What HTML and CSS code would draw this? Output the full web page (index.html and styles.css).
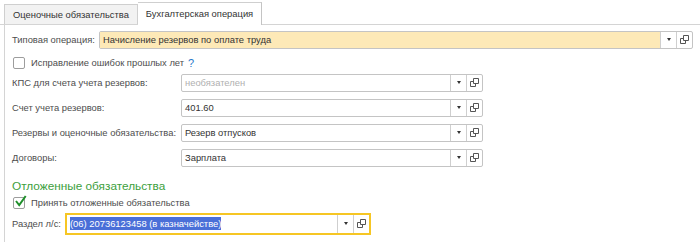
FILE: index.html
```html
<!DOCTYPE html>
<html>
	<head>
		<title>Бухгалтерская операция</title>
		<link rel="stylesheet" href="styles.css">
	</head>
	<body>
		<div class="tabs">
			<div class="tab">Оценочные обязательства</div>
			<div class="tab active">Бухгалтерская операция</div>
		</div>
		<div class="panel">
			<div class="row row-first">
				<span class="label label-short">Типовая операция:</span>
				<div class="field field-wide field-yellow">
					<span class="value">Начисление резервов по оплате труда</span>
					<span class="btn"><span class="arrow"></span></span>
					<span class="btn"><svg width="9" height="9" viewBox="0 0 9 9"><path d="M3.5 0.5h5v5h-5z" fill="none" stroke="#555"/><path d="M3.5 3.5h-3v5h5v-3" fill="none" stroke="#555"/></svg></span>
				</div>
			</div>
			<div class="check-row check-row-low">
				<span class="checkbox"></span>
				<span>Исправление ошибок прошлых лет</span>
				<span class="help">?</span>
			</div>
			<div class="row">
				<span class="label">КПС для счета учета резервов:</span>
				<div class="field">
					<span class="value placeholder">необязателен</span>
					<span class="btn"><span class="arrow"></span></span>
					<span class="btn"><svg width="9" height="9" viewBox="0 0 9 9"><path d="M3.5 0.5h5v5h-5z" fill="none" stroke="#555"/><path d="M3.5 3.5h-3v5h5v-3" fill="none" stroke="#555"/></svg></span>
				</div>
			</div>
			<div class="row">
				<span class="label">Счет учета резервов:</span>
				<div class="field">
					<span class="value">401.60</span>
					<span class="btn"><span class="arrow"></span></span>
					<span class="btn"><svg width="9" height="9" viewBox="0 0 9 9"><path d="M3.5 0.5h5v5h-5z" fill="none" stroke="#555"/><path d="M3.5 3.5h-3v5h5v-3" fill="none" stroke="#555"/></svg></span>
				</div>
			</div>
			<div class="row">
				<span class="label">Резервы и оценочные обязательства:</span>
				<div class="field">
					<span class="value">Резерв отпусков</span>
					<span class="btn"><span class="arrow"></span></span>
					<span class="btn"><svg width="9" height="9" viewBox="0 0 9 9"><path d="M3.5 0.5h5v5h-5z" fill="none" stroke="#555"/><path d="M3.5 3.5h-3v5h5v-3" fill="none" stroke="#555"/></svg></span>
				</div>
			</div>
			<div class="row">
				<span class="label">Договоры:</span>
				<div class="field">
					<span class="value">Зарплата</span>
					<span class="btn"><span class="arrow"></span></span>
					<span class="btn"><svg width="9" height="9" viewBox="0 0 9 9"><path d="M3.5 0.5h5v5h-5z" fill="none" stroke="#555"/><path d="M3.5 3.5h-3v5h5v-3" fill="none" stroke="#555"/></svg></span>
				</div>
			</div>
			<h3 class="group-title">Отложенные обязательства</h3>
			<div class="check-row check-row-tight">
				<span class="checkbox checked"><svg width="13" height="13" viewBox="0 0 13 13"><path d="M2 6l3.2 4 6.5-9" fill="none" stroke="#1f8f2b" stroke-width="2"/></svg></span>
				<span>Принять отложенные обязательства</span>
			</div>
			<div class="row">
				<span class="label label-tiny">Раздел л/с:</span>
				<div class="field field-focus">
					<span class="value"><span class="selected">(06) 20736123458 (в казначействе)</span></span>
					<span class="btn"><span class="arrow"></span></span>
					<span class="btn"><svg width="9" height="9" viewBox="0 0 9 9"><path d="M3.5 0.5h5v5h-5z" fill="none" stroke="#555"/><path d="M3.5 3.5h-3v5h5v-3" fill="none" stroke="#555"/></svg></span>
				</div>
			</div>
		</div>
	</body>
</html>
```

FILE: styles.css
```css
body {
	margin: 0;
	font-family: "Liberation Sans", Arial, sans-serif;
	font-size: 9.4px;
	color: #4d4d4d;
	background: #fff;
}
.tabs {
	display: flex;
	align-items: flex-end;
	height: 24px;
	padding-left: 4px;
	border-bottom: 1px solid #d4d4d4;
}
.tab {
	height: 19px;
	line-height: 19px;
	padding: 0 8px;
	background: #f2f2f2;
	border: 1px solid #cfcfcf;
	border-bottom: none;
	color: #333;
	white-space: nowrap;
}
.tab.active {
	height: 22px;
	line-height: 22px;
	background: #fff;
	margin-bottom: -1px;
	border-left: none;
	border-right-color: #c4c4c4;
}
.panel {
	margin-left: 4px;
	border-left: 1px solid #d4d4d4;
	padding: 2px 0 0 7px;
	height: 217px;
	box-sizing: border-box;
}
.row {
	display: flex;
	align-items: center;
	height: 25px;
	white-space: nowrap;
}
.label {
	width: 169px;
	flex-shrink: 0;
}
.label-short {
	width: 87px;
}
.label-tiny {
	width: 54px;
}
.field {
	display: flex;
	align-items: stretch;
	width: 302px;
	height: 18px;
	border: 1px solid #c4c4c4;
	border-radius: 2px;
	box-sizing: border-box;
	background: #fff;
	color: #333;
}
.field-wide {
	width: 594px;
}
.field-yellow .value {
	background: #fde9b7;
}
.field-focus {
	width: 306px;
	height: 22px;
	border: 2px solid #f6c624;
	border-radius: 0;
	margin-left: -1px;
}
.value {
	flex: 1;
	display: flex;
	align-items: center;
	padding-left: 3px;
	white-space: nowrap;
	overflow: hidden;
}
.placeholder {
	color: #b0b0b0;
}
.selected {
	background: #4a6fd8;
	color: #fff;
	padding: 1px 0;
}
.btn {
	width: 15px;
	display: flex;
	align-items: center;
	justify-content: center;
	border-left: 1px solid #cfcfcf;
}
.arrow {
	width: 0;
	height: 0;
	border-left: 2.5px solid transparent;
	border-right: 2.5px solid transparent;
	border-top: 3px solid #333;
}
.check-row {
	display: flex;
	align-items: center;
	height: 18px;
	padding-left: 1px;
	white-space: nowrap;
	box-sizing: border-box;
}
.check-row-low {
	padding-top: 3px;
}
.check-row-tight {
	height: 15px;
	margin-bottom: 1px;
}
.checkbox {
	width: 12px;
	height: 12px;
	border: 1px solid #9d9d9d;
	border-radius: 2px;
	box-sizing: border-box;
	margin-right: 6px;
	position: relative;
}
.checkbox.checked svg {
	position: absolute;
	left: 0;
	top: -3px;
}
.help {
	color: #1f77c9;
	margin-left: 4px;
	font-size: 11px;
}
.group-title {
	margin: 7px 0 0 0;
	font-size: 11.8px;
	font-weight: normal;
	color: #3ca03c;
	height: 18px;
	line-height: 18px;
}
```
